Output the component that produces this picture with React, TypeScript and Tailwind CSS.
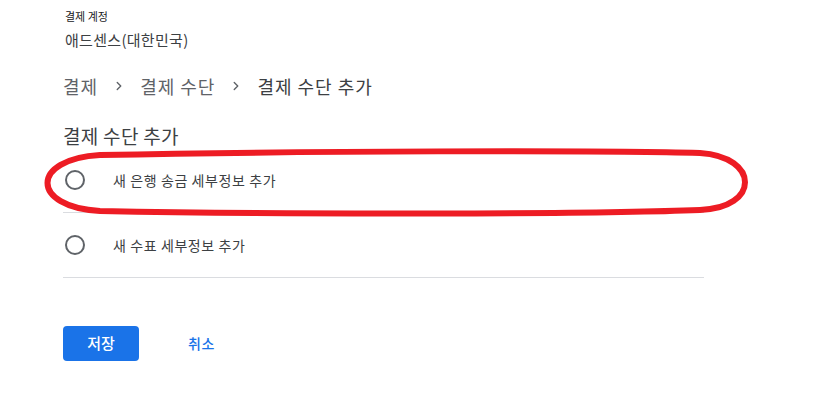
import React, { useState } from 'react';

const font = { fontFamily: '"Noto Sans CJK KR", "Noto Sans", sans-serif' };

const options = [
  { id: 'bank', label: '새 은행 송금 세부정보 추가' },
  { id: 'check', label: '새 수표 세부정보 추가' },
];

function Chevron() {
  return (
    <svg className="h-[14px] w-[14px] text-[#5f6368]" viewBox="0 0 24 24" fill="none" stroke="currentColor" strokeWidth={2.4}>
      <path strokeLinecap="round" strokeLinejoin="round" d="M9 6l6 6-6 6" />
    </svg>
  );
}

export default function App() {
  const [selected, setSelected] = useState<string | null>(null);

  return (
    <div className="relative h-[404px] w-[821px] overflow-hidden bg-white" style={font}>
      <div className="pl-[63px]">
        {/* Account */}
        <div className="pl-[2px] pt-[9px] text-[11px] leading-[14px] text-[#202124]">결제 계정</div>
        <div className="mt-[7px] pl-[2px] text-[15px] leading-[20px] tracking-[0.3px] text-[#3c4043]">애드센스(대한민국)</div>

        {/* Breadcrumb */}
        <nav className="mt-[23px] flex h-[26px] items-center text-[18px] tracking-[1px] text-[#5f6368]">
          <span>결제</span>
          <span className="mx-[14px]"><Chevron /></span>
          <span>결제 수단</span>
          <span className="mx-[14px]"><Chevron /></span>
          <span className="text-[#3c4043]">결제 수단 추가</span>
        </nav>

        <h1 className="mt-[24px] text-[19px] leading-[26px] tracking-[0.3px] text-[#3c4043]">결제 수단 추가</h1>

        {/* Options */}
        <div className="mt-[-1px] w-[641px]">
          {options.map((o) => (
            <label key={o.id} className="flex h-[65px] cursor-pointer items-center border-b border-[#dadce0]">
              <span className="ml-[2px] flex h-[20px] w-[20px] items-center justify-center rounded-full border-2 border-[#5f6368]">
                {selected === o.id && <span className="h-[10px] w-[10px] rounded-full bg-[#1a73e8]" />}
              </span>
              <input type="radio" name="pm" className="hidden" checked={selected === o.id} onChange={() => setSelected(o.id)} />
              <span className="ml-[28px] text-[14px] tracking-[0.6px] text-[#3c4043]">{o.label}</span>
            </label>
          ))}
        </div>

        {/* Actions */}
        <div className="mt-[48px] flex items-center">
          <button className="h-[35px] w-[76px] rounded-[4px] bg-[#1a73e8] text-[15px] font-medium text-white">저장</button>
          <button className="ml-[49px] text-[14px] font-medium tracking-[0.5px] text-[#1a73e8]">취소</button>
        </div>
      </div>

      {/* Annotation */}
      <svg className="pointer-events-none absolute left-0 top-0" width="821" height="404">
        <path
          d="M100 155 C 300 151, 600 150, 700 153 C 760 157, 760 208, 700 210 C 600 214, 300 215, 100 211 C 30 207, 30 159, 100 155 Z"
          fill="none"
          stroke="#ed1c24"
          strokeWidth={6}
        />
      </svg>
    </div>
  );
}
